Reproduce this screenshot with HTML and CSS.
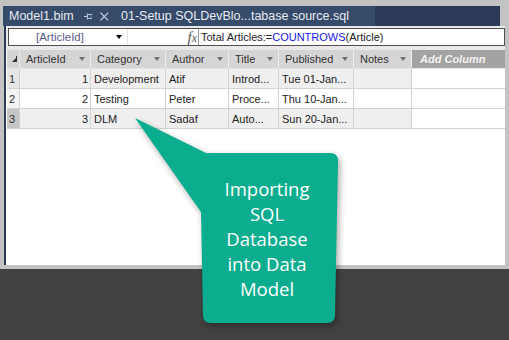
FILE: index.html
```html
<!DOCTYPE html>
<html lang="en">
<head>
    <meta charset="UTF-8">
    <title>Model1.bim</title>
    <link rel="stylesheet" href="styles.css">
</head>
<body>
    <div class="tabbar">
        <div class="tab tab-active">
            <span class="tab-name">Model1.bim</span>
            <svg class="pin" width="9" height="7" viewBox="0 0 9 7">
                <path d="M0 3.5H3M3.5 0.5V6.5M3.5 1.5H8.5V5.5H3.5" fill="none" stroke="#c9d1e0" stroke-width="1"/>
            </svg>
            <svg class="close" width="9" height="9" viewBox="0 0 9 9">
                <path d="M0.5 0.5L8.5 8.5M8.5 0.5L0.5 8.5" stroke="#c9d1e0" stroke-width="1.3"/>
            </svg>
        </div>
        <div class="tab">01-Setup SQLDevBlo...tabase source.sql</div>
    </div>

    <div class="doc">
        <div class="formula-wrap">
            <div class="formula">
                <div class="namebox">
                    <span class="name">[ArticleId]</span>
                    <span class="drop"></span>
                </div>
                <div class="fx"><i>f</i><i class="x">x</i></div>
                <div class="expr">Total Articles:=<span class="fn">COUNTROWS</span>(Article)</div>
            </div>
        </div>

        <div class="grid">
            <div class="row head">
                <div class="cell corner">
                    <svg width="5" height="6" viewBox="0 0 5 6"><path d="M4 0H5V6H0L4 2Z" fill="#333"/></svg>
                </div>
                <div class="cell hcell">ArticleId<span class="arrow"></span></div>
                <div class="cell hcell">Category<span class="arrow"></span></div>
                <div class="cell hcell">Author<span class="arrow"></span></div>
                <div class="cell hcell">Title<span class="arrow"></span></div>
                <div class="cell hcell">Published<span class="arrow"></span></div>
                <div class="cell hcell">Notes<span class="arrow"></span></div>
                <div class="cell addcol">Add Column</div>
            </div>
            <div class="row shade">
                <div class="cell rowhead">1</div>
                <div class="cell num">1</div>
                <div class="cell">Development</div>
                <div class="cell">Atif</div>
                <div class="cell">Introd...</div>
                <div class="cell">Tue 01-Jan...</div>
                <div class="cell"></div>
                <div class="cell blank"></div>
            </div>
            <div class="row">
                <div class="cell rowhead">2</div>
                <div class="cell num">2</div>
                <div class="cell">Testing</div>
                <div class="cell">Peter</div>
                <div class="cell">Proce...</div>
                <div class="cell">Thu 10-Jan...</div>
                <div class="cell"></div>
                <div class="cell blank"></div>
            </div>
            <div class="row shade current">
                <div class="cell rowhead">3</div>
                <div class="cell num">3</div>
                <div class="cell">DLM</div>
                <div class="cell">Sadaf</div>
                <div class="cell">Auto...</div>
                <div class="cell">Sun 20-Jan...</div>
                <div class="cell"></div>
                <div class="cell blank"></div>
            </div>
        </div>
    </div>

    <div class="taskbar"></div>

    <svg class="callout-shape" width="230" height="230" viewBox="0 0 230 230">
        <path d="M15 13L86 48H210Q218 48 218 56L215 210Q215 218 207 218H91Q83 218 83 210L81 107Z" fill="#0aad8e"/>
    </svg>
    <div class="callout-text">Importing<br>SQL<br>Database<br>into Data<br>Model</div>
</body>
</html>
```

FILE: styles.css
```css
body {
    margin: 0;
    width: 509px;
    height: 340px;
    overflow: hidden;
    position: relative;
    background: #c3c3c3;
    font-family: 'Liberation Sans', Arial, sans-serif;
}

/* document tabs */
.tabbar {
    display: flex;
    height: 20px;
    margin: 6px 9px 0 3px;
    background: #2a3a57;
}
.tab {
    display: flex;
    align-items: center;
    padding: 0 6px;
    font-size: 12.5px;
    color: #e6eaf2;
    background: #364a69;
    white-space: nowrap;
}
.tab-active {
    width: 100px;
}
.tab-active .pin {
    margin-left: 10px;
}
.tab-active .close {
    margin-left: 8px;
}
.tab + .tab {
    width: 248px;
}

/* model designer pane */
.doc {
    margin-left: 4px;
    width: 499px;
    height: 239px;
    border-left: 2px solid #2c3b56;
    background: #fff;
}
.formula-wrap {
    padding: 2px 0 4px 2px;
    background: #e9e9e9;
}
.formula {
    display: flex;
    height: 16px;
    border: 1px solid #4d4d4d;
    background: #fff;
    font-size: 11px;
    line-height: 16px;
}
.namebox {
    display: flex;
    align-items: center;
    width: 119px;
    border-right: 1px solid #e2e2e2;
    box-sizing: border-box;
}
.name {
    margin-left: 27px;
    font-size: 11.5px;
    color: #5a5a8c;
}
.drop {
    margin-left: auto;
    margin-right: 5px;
    border-left: 3px solid transparent;
    border-right: 3px solid transparent;
    border-top: 4px solid #000;
}
.fx {
    width: 71px;
    box-sizing: border-box;
    border-right: 1px solid #9a9a9a;
    text-align: right;
    padding-right: 1px;
    font-family: 'Liberation Serif', serif;
    font-size: 15px;
    color: #555;
}
.fx .x {
    font-size: 12px;
}
.expr {
    padding-left: 2px;
    color: #222;
}
.fn {
    color: #1717f0;
}

/* data grid */
.grid {
    margin-left: 1px;
    font-size: 11px;
    color: #222;
}
.row {
    display: grid;
    grid-template-columns: 13px 71px 75px 63px 50px 75px 58px 93px;
    height: 20px;
}
.cell {
    box-sizing: border-box;
    border-right: 1px solid #d2d2d2;
    border-bottom: 1px solid #d2d2d2;
    padding: 0 3px;
    line-height: 20px;
    white-space: nowrap;
    overflow: hidden;
}
.shade .cell {
    background: #efefef;
}
.row .blank {
    background: #fff;
    border-right: none;
}
.num {
    text-align: right;
    padding-right: 2px;
}
.row .rowhead {
    padding: 0 2px;
    background: #f3f3f3;
    color: #333;
}
.shade .rowhead {
    background: #e6e6e6;
}
.current .rowhead {
    background: #c6c6c6;
}

.head {
    height: 19px;
}
.head .cell {
    background: #d5d5d5;
    border-right-color: #ececec;
    border-bottom-color: #e4e4e4;
    line-height: 18px;
    color: #333;
}
.corner {
    display: flex;
    align-items: flex-end;
    padding: 0 0 6px 5px;
}
.hcell {
    display: flex;
    align-items: center;
    justify-content: space-between;
    padding: 0 5px 0 6px;
}
.arrow {
    border-left: 3.5px solid transparent;
    border-right: 3.5px solid transparent;
    border-top: 4px solid #707070;
}
.head .addcol {
    background: #a3a3a3;
    color: #f4f4f4;
    font-style: italic;
    font-weight: bold;
    padding-left: 8px;
    border-right: none;
}

.taskbar {
    margin-top: 4px;
    height: 71px;
    background: #424242;
}

/* annotation bubble */
.callout-shape {
    position: absolute;
    left: 120px;
    top: 105px;
    filter: drop-shadow(2px 3px 3px rgba(0, 0, 0, 0.35));
}
.callout-text {
    position: absolute;
    left: 199px;
    top: 153px;
    width: 136px;
    height: 170px;
    display: flex;
    align-items: center;
    justify-content: center;
    text-align: center;
    font-family: 'Open Sans', sans-serif;
    font-size: 18.5px;
    font-weight: 500;
    line-height: 25px;
    color: #fff;
}
```
